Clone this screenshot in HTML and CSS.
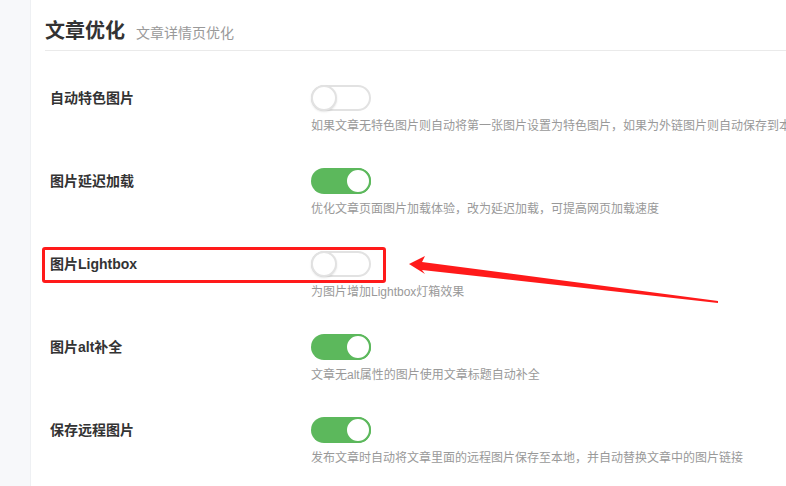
FILE: index.html
```html
<!DOCTYPE html>
<html lang="zh-CN">
<head>
    <meta charset="UTF-8">
    <meta name="viewport" content="width=device-width, initial-scale=1.0">
    <title>文章优化</title>
    <link rel="stylesheet" href="styles.css">
</head>
<body>
    <div class="gutter"></div>

    <div class="panel">
        <div class="panel-header">
            <h2>文章优化</h2>
            <span class="subtitle">文章详情页优化</span>
        </div>

        <div class="form">
            <div class="form-row">
                <div class="form-label">自动特色图片</div>
                <div class="form-field">
                    <span class="switch"></span>
                    <div class="form-desc">如果文章无特色图片则自动将第一张图片设置为特色图片，如果为外链图片则自动保存到本地</div>
                </div>
            </div>

            <div class="form-row">
                <div class="form-label">图片延迟加载</div>
                <div class="form-field">
                    <span class="switch on"></span>
                    <div class="form-desc">优化文章页面图片加载体验，改为延迟加载，可提高网页加载速度</div>
                </div>
            </div>

            <div class="form-row">
                <div class="highlight-box"></div>
                <div class="form-label">图片Lightbox</div>
                <div class="form-field">
                    <span class="switch"></span>
                    <div class="form-desc">为图片增加Lightbox灯箱效果</div>
                </div>
            </div>

            <div class="form-row">
                <div class="form-label">图片alt补全</div>
                <div class="form-field">
                    <span class="switch on"></span>
                    <div class="form-desc">文章无alt属性的图片使用文章标题自动补全</div>
                </div>
            </div>

            <div class="form-row">
                <div class="form-label">保存远程图片</div>
                <div class="form-field">
                    <span class="switch on"></span>
                    <div class="form-desc">发布文章时自动将文章里面的远程图片保存至本地，并自动替换文章中的图片链接</div>
                </div>
            </div>
        </div>
    </div>

    <!-- 标注箭头 -->
    <svg class="annotation" width="786" height="486" viewBox="0 0 786 486">
        <polygon points="409,264 425,256 422,262 718,301 718,303 422,270 425,274" fill="#ff1a1a"/>
    </svg>
</body>
</html>
```

FILE: styles.css
```css
html, body {
    margin: 0;
    height: 100%;
}
body {
    display: flex;
    overflow: hidden;
    background: #f7f8fa;
    font-family: "Liberation Sans", "Noto Sans CJK SC", sans-serif;
    color: #333;
    position: relative;
}
.gutter {
    width: 30px;
    flex-shrink: 0;
}
.panel {
    flex: 1;
    background: #fff;
    border-left: 1px solid #eef0f3;
    padding-left: 14px;
    min-width: 0;
}
.panel-header {
    display: flex;
    align-items: baseline;
    gap: 11px;
    padding: 17px 0 5px;
    border-bottom: 1px solid #eaeaea;
}
.panel-header h2 {
    margin: 0;
    font-size: 20px;
    line-height: 28px;
    font-weight: bold;
    color: #333;
}
.subtitle {
    font-size: 14px;
    color: #999;
}
.form {
    padding-top: 34px;
}
.form-row {
    display: flex;
    position: relative;
    margin-bottom: 33px;
}
.form-label {
    width: 266px;
    flex-shrink: 0;
    padding-left: 5px;
    box-sizing: border-box;
    font-size: 14px;
    font-weight: bold;
    line-height: 26px;
    color: #333;
}
.form-field {
    flex: 1;
    min-width: 0;
}
.form-desc {
    margin-top: 6px;
    font-size: 12px;
    line-height: 18px;
    color: #999;
    white-space: nowrap;
}
.switch {
    display: block;
    position: relative;
    width: 60px;
    height: 26px;
    border-radius: 13px;
    background: #fff;
    box-shadow: inset 0 0 0 2px #e2e2e2;
}
.switch::after {
    content: "";
    position: absolute;
    top: 0;
    left: 0;
    width: 26px;
    height: 26px;
    border-radius: 50%;
    background: #fff;
    box-sizing: border-box;
    border: 2px solid #e2e2e2;
    box-shadow: 0 1px 2px rgba(0, 0, 0, 0.1);
}
.switch.on {
    background: #5cb85c;
    box-shadow: none;
}
.switch.on::after {
    left: auto;
    right: 0;
    border-color: #5cb85c;
    box-shadow: none;
}
.highlight-box {
    position: absolute;
    left: -3px;
    top: -4px;
    width: 344px;
    height: 36px;
    box-sizing: border-box;
    border: 3px solid #ff1a1a;
    border-radius: 3px;
}
.annotation {
    position: absolute;
    top: 0;
    left: 0;
    pointer-events: none;
}
```
